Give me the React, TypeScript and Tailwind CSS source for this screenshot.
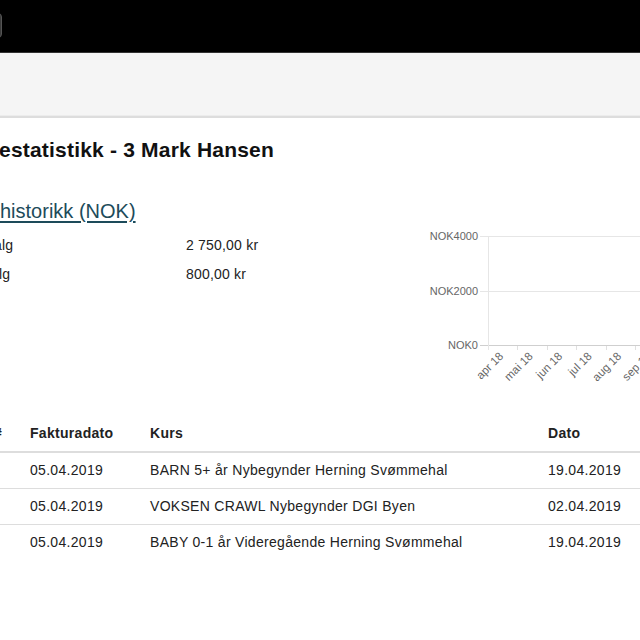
const months = ["apr 18", "mai 18", "jun 18", "jul 18", "aug 18", "sep 18"];

const rows = [
  { faktura: "05.04.2019", kurs: "BARN 5+ år Nybegynder Herning Svømmehal", dato: "19.04.2019" },
  { faktura: "05.04.2019", kurs: "VOKSEN CRAWL Nybegynder DGI Byen", dato: "02.04.2019" },
  { faktura: "05.04.2019", kurs: "BABY 0-1 år Videregående Herning Svømmehal", dato: "19.04.2019" },
];

function SalesChart() {
  // page offset of this svg: x 420, y 200
  const ticks = [68, 97, 127, 156, 186, 215];
  return (
    <svg width="240" height="200" className="block shrink-0" style={{ fontFamily: '"Liberation Sans", Arial, sans-serif' }}>
      {[36, 91].map((y) => (
        <line key={y} x1="60" x2="240" y1={y + 0.5} y2={y + 0.5} stroke="#e6e6e6" />
      ))}
      <line x1="60" x2="240" y1="145.5" y2="145.5" stroke="#cfcfcf" />
      <line x1="68.5" x2="68.5" y1="36" y2="150" stroke="#e6e6e6" />
      {ticks.slice(1).map((x) => (
        <line key={x} x1={x + 0.5} x2={x + 0.5} y1="146" y2="150" stroke="#e0e0e0" />
      ))}
      {[
        ["NOK4000", 36],
        ["NOK2000", 91],
        ["NOK0", 145],
      ].map(([t, y]) => (
        <text key={t} x="58" y={Number(y) + 4} textAnchor="end" fontSize="11" fill="#666">
          {t}
        </text>
      ))}
      {months.map((m, i) => {
        const x = ticks[0] + 16 + i * 29.5;
        return (
          <text key={m} x={x} y="157" textAnchor="end" fontSize="11.5" fill="#666" transform={`rotate(-45 ${x} 157)`}>
            {m}
          </text>
        );
      })}
    </svg>
  );
}

export default function App() {
  return (
    <div
      className="flex h-[640px] w-[640px] flex-col overflow-hidden bg-white text-[14px] text-[#222]"
      style={{ fontFamily: '"Liberation Sans", Arial, sans-serif' }}
    >
      <div className="flex h-[53px] shrink-0 flex-col border-b border-[#333] bg-black">
        <div className="-ml-[20px] mt-[13px] h-[25px] w-[22px] rounded border border-[#555] bg-[#3a3a3a]" />
      </div>
      <div className="flex h-[65px] shrink-0 flex-col border-b-2 border-[#dddddd] bg-[#f5f5f5]">
        <div className="mt-[62px] h-px bg-[#ececec]" />
      </div>

      <h1 className="-ml-[1px] mt-[21px] whitespace-nowrap text-[21px] font-bold leading-[22px] tracking-[0.2px] text-[#111]">
        estatistikk - 3 Mark Hansen
      </h1>

      <div className="mt-[39px] flex shrink-0">
        <div className="w-[420px] shrink-0">
          <a href="#" className="block text-[20px] leading-[22px] text-[#1d4b5a] underline underline-offset-[3px]">
            historikk (NOK)
          </a>
          <div className="mt-[9px] tracking-[0.2px]">
            <div className="flex h-[29px] items-center">
              <span className="-ml-[6px] w-[192px]">alg</span>
              <span>2 750,00 kr</span>
            </div>
            <div className="flex h-[29px] items-center">
              <span className="-ml-[1px] w-[187px]">lg</span>
              <span>800,00 kr</span>
            </div>
          </div>
        </div>
        <SalesChart />
      </div>

      <table className="-ml-[14px] mt-[15px] w-[820px] shrink-0 table-fixed border-collapse tracking-[0.3px]">
        <colgroup>
          <col className="w-[36px]" />
          <col className="w-[120px]" />
          <col className="w-[398px]" />
          <col className="w-[150px]" />
          <col />
        </colgroup>
        <thead>
          <tr className="border-b-2 border-[#dddddd] text-left">
            <th className="px-2 py-2 font-bold leading-[20px]">#</th>
            <th className="px-2 py-2 font-bold leading-[20px]">Fakturadato</th>
            <th className="px-2 py-2 font-bold leading-[20px]">Kurs</th>
            <th className="px-2 py-2 font-bold leading-[20px]">Dato</th>
            <th className="px-2 py-2 font-bold leading-[20px]">Beløp</th>
          </tr>
        </thead>
        <tbody>
          {rows.map((r, i) => (
            <tr key={i} className="border-t border-[#dddddd]">
              <td className="px-2 py-2 leading-[19px]" />
              <td className="px-2 py-2 leading-[19px]">{r.faktura}</td>
              <td className="whitespace-nowrap px-2 py-2 leading-[19px]">{r.kurs}</td>
              <td className="px-2 py-2 leading-[19px]">{r.dato}</td>
              <td className="px-2 py-2 leading-[19px]">kr</td>
            </tr>
          ))}
        </tbody>
      </table>
    </div>
  );
}
